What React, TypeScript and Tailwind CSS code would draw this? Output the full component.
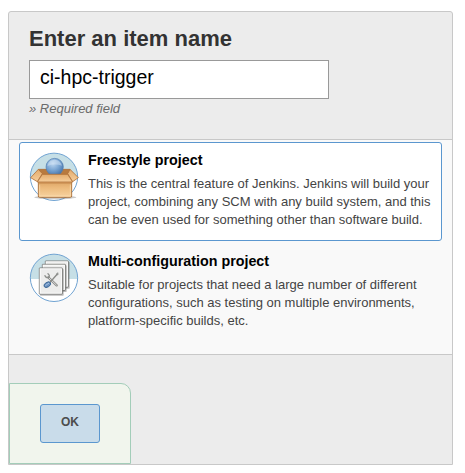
import type { ReactNode } from 'react';

function FreestyleIcon() {
  return (
    <svg viewBox="27 36 150 150" className="h-[50px] w-[50px] shrink-0">
      <defs>
        <radialGradient id="ball" cx="0.4" cy="0.3" r="0.75">
          <stop offset="0" stopColor="#bfd8f1" />
          <stop offset="0.5" stopColor="#7ba6d3" />
          <stop offset="1" stopColor="#3f6fa6" />
        </radialGradient>
        <linearGradient id="carton" x1="0" y1="0" x2="0" y2="1">
          <stop offset="0" stopColor="#dca363" />
          <stop offset="0.4" stopColor="#ecba7c" />
          <stop offset="1" stopColor="#f7d3a0" />
        </linearGradient>
        <linearGradient id="flap" x1="0" y1="0" x2="0" y2="1">
          <stop offset="0" stopColor="#e3ab6c" />
          <stop offset="1" stopColor="#f6cf9c" />
        </linearGradient>
        <clipPath id="disc1"><circle cx="102" cy="110.5" r="71" /></clipPath>
      </defs>
      <g clipPath="url(#disc1)">
        <rect x="27" y="36" width="150" height="150" fill="#fff" />
        <rect x="27" y="36" width="150" height="78" fill="#c6dfe6" />
      </g>
      <circle cx="102" cy="110.5" r="71" fill="none" stroke="#70a3d2" strokeWidth="3" />
      <ellipse cx="106" cy="172" rx="63" ry="6" fill="#777" opacity="0.4" />
      <path d="M55 88 H150 L146 106 H62Z" fill="#b87a3e" stroke="#a9662c" strokeWidth="2" />
      <circle cx="104" cy="81" r="26" fill="url(#ball)" stroke="#5480b0" strokeWidth="2" />
      <path d="M82 78 Q87 59 104 59 Q121 60 126 77 Q104 70 82 78Z" fill="#d5e6f5" opacity="0.5" />
      <path d="M55 124 H155 V168 Q155 172 151 172 H59 Q55 172 55 168Z" fill="url(#carton)" stroke="#a5672f" strokeWidth="2.5" />
      <path d="M59 134 V168 H151 V134" fill="none" stroke="#fde0b4" strokeWidth="2" />
      <path d="M55 88 L67 101 L52 125 L32 113Z" fill="url(#flap)" stroke="#b0713a" strokeWidth="2.5" strokeLinejoin="round" />
      <path d="M150 88 L143 101 L158 125 L175 113Z" fill="url(#flap)" stroke="#b0713a" strokeWidth="2.5" strokeLinejoin="round" />
      <path d="M67 103 H143 L158 126 H52Z" fill="url(#flap)" stroke="#b0713a" strokeWidth="2.5" strokeLinejoin="round" />
      <path d="M58 129 H152" stroke="#c2854a" strokeWidth="3" />
    </svg>
  );
}

function Sheet({ x, y }: { x: number; y: number }) {
  return (
    <g transform={`translate(${x} ${y})`}>
      <rect x="2" y="3" width="71" height="80" rx="2" fill="#555" opacity="0.4" />
      <rect width="69" height="78" rx="1" fill="#ededec" stroke="#6a6b69" strokeWidth="2.5" />
      <rect x="2.5" y="2.5" width="64" height="73" fill="none" stroke="#fff" strokeWidth="2.5" />
    </g>
  );
}

function MultiConfigIcon() {
  return (
    <svg viewBox="27 24 150 150" className="h-[50px] w-[50px] shrink-0">
      <defs>
        <clipPath id="disc2"><circle cx="102" cy="98.5" r="71" /></clipPath>
      </defs>
      <g clipPath="url(#disc2)">
        <rect x="27" y="24" width="150" height="150" fill="#fff" />
        <rect x="27" y="24" width="150" height="78" fill="#c6dfe6" />
      </g>
      <circle cx="102" cy="98.5" r="71" fill="none" stroke="#70a3d2" strokeWidth="3" />
      <Sheet x={76} y={48} />
      <Sheet x={67} y={58} />
      <Sheet x={58} y={69} />
      <path d="M85 97 L110 121" stroke="#8a8b88" strokeWidth="7" strokeLinecap="round" />
      <path d="M86 98 L109 120" stroke="#dededd" strokeWidth="3" strokeLinecap="round" />
      <path d="M84 86 Q91 92 86 97 Q78 100 75 92" fill="none" stroke="#8c8e8a" strokeWidth="4" strokeLinecap="round" />
      <path d="M112 87 L91 111" stroke="#8a8b88" strokeWidth="4" strokeLinecap="round" />
      <path d="M108 88 L114 83 L114 90Z" fill="#a5a6a3" stroke="#8a8b88" strokeWidth="2" />
      <ellipse cx="82" cy="119" rx="11" ry="7" transform="rotate(-32 82 119)" fill="#6a90bf" stroke="#34608f" strokeWidth="2.5" />
      <path d="M77 121 L86 115" stroke="#b3cce7" strokeWidth="2.5" strokeLinecap="round" />
    </svg>
  );
}

interface ItemProps {
  icon: ReactNode;
  title: string;
  lines: string[];
  selected?: boolean;
}

function Item({ icon, title, lines, selected }: ItemProps) {
  return (
    <li
      className={`flex h-[99px] w-[423px] rounded-[3px] border pt-[9px] pl-[9px] ${
        selected ? 'border-[#5b97cf] bg-white' : 'border-transparent'
      }`}
    >
      {icon}
      <div className="ml-[9px]">
        <h2 className="text-[14.3px] leading-4 font-bold text-black">{title}</h2>
        <p className="mt-[7px] text-[13px] leading-[18px] whitespace-nowrap text-[#444]">
          {lines.map((line) => (
            <span key={line} className="block">{line}</span>
          ))}
        </p>
      </div>
    </li>
  );
}

export default function App() {
  return (
    <div className="h-[473px] w-[465px] bg-white pt-[11px] pl-2 font-['Liberation_Sans',Arial,sans-serif]">
      <form className="flex h-[454px] w-[445px] flex-col rounded-t-[3px] border border-[#c8c8c8] bg-[#ececec]">
        <div className="h-[128px] border-b border-[#c8c8c8] pt-[13px] pl-5">
          <label htmlFor="name" className="block text-[22px] leading-[27px] font-bold text-[#333]">
            Enter an item name
          </label>
          <input
            id="name"
            defaultValue="ci-hpc-trigger"
            className="mt-2 block h-[39px] w-[300px] border border-[#999] bg-white px-[10px] pb-1 text-[19.5px] text-black outline-none"
          />
          <div className="mt-[2px] text-[13px] leading-4 text-[#6b6b6b] italic">» Required field</div>
        </div>
        <ul className="flex h-[215px] flex-col gap-[2px] border-b border-[#c8c8c8] bg-[#f9f9f9] pt-[2px] pl-[10px]">
          <Item
            selected
            icon={<FreestyleIcon />}
            title="Freestyle project"
            lines={[
              'This is the central feature of Jenkins. Jenkins will build your',
              'project, combining any SCM with any build system, and this',
              'can be even used for something other than software build.',
            ]}
          />
          <Item
            icon={<MultiConfigIcon />}
            title="Multi-configuration project"
            lines={[
              'Suitable for projects that need a large number of different',
              'configurations, such as testing on multiple environments,',
              'platform-specific builds, etc.',
            ]}
          />
        </ul>
        <div className="mt-auto h-[81px] w-[122px] rounded-tr-[10px] border border-[#a3cdb9] bg-[#f1f5ed] pt-5 pl-[30px]">
          <button
            type="button"
            className="block h-[39px] w-[60px] rounded-[3px] border border-[#5b97cf] bg-[#c9dcea] pb-[3px] text-[12px] font-bold text-[#4d4d4d]"
          >
            OK
          </button>
        </div>
      </form>
    </div>
  );
}
